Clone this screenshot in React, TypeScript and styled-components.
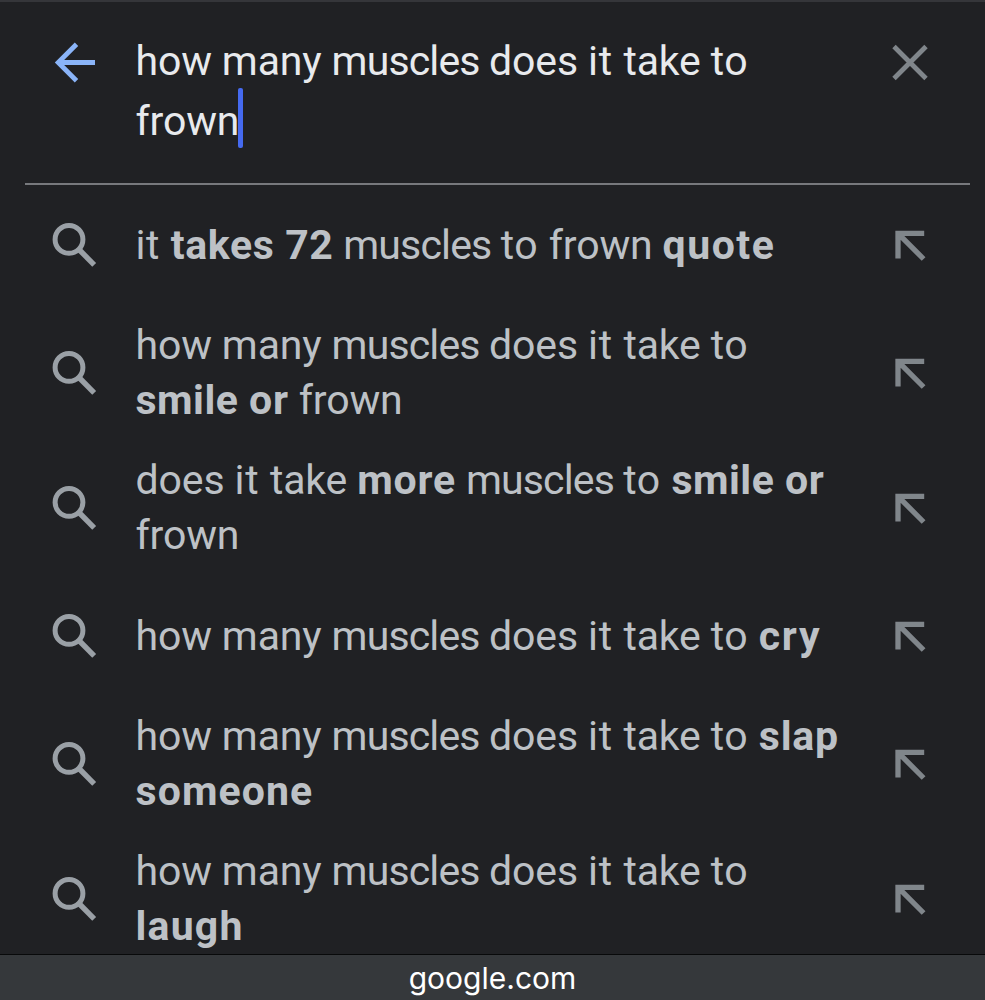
import React from "react";
import styled, { createGlobalStyle } from "styled-components";

const GlobalStyle = createGlobalStyle`
  * { box-sizing: border-box; }
  html, body { margin: 0; background: #202124; }
`;

const Screen = styled.div`
  display: flex;
  flex-direction: column;
  width: 985px;
  height: 1000px;
  overflow: hidden;
  background: #202124;
  border-top: 2px solid #35363a;
  font-family: Roboto, sans-serif;
  font-size: 41px;
`;

const SearchHeader = styled.header`
  display: flex;
  flex: none;
  height: 183px;
  margin: 0 15px 0 25px;
  padding: 29px 35px 0 25px;
  border-bottom: 2px solid #77797d;
`;

const HeaderButton = styled.button`
  display: flex;
  flex: none;
  width: 50px;
  height: 62px;
  padding: 0;
  border: 0;
  background: none;
  align-items: center;
  justify-content: center;
`;

const Query = styled.div`
  flex: 1;
  margin-left: 35.5px;
  color: #e8eaed;
  line-height: 60px;
  white-space: nowrap;
`;

const QueryLine = styled.div`
  display: flex;
  white-space: pre;
`;

const Caret = styled.span`
  width: 5px;
  height: 60px;
  margin: -3px 0 0 -1px;
  border-radius: 2px;
  background: #456af0;
`;

const Suggestions = styled.ul`
  flex: 1;
  min-height: 0;
  margin: 0;
  padding: 0;
  overflow: hidden;
  list-style: none;
`;

const Suggestion = styled.li<{ $double?: boolean }>`
  display: flex;
  align-items: center;
  height: ${(p) => (p.$double ? 135.5 : 120)}px;
  padding: 0 56px 0 50px;
`;

const SuggestionText = styled.div`
  flex: 1;
  margin-left: 35.5px;
  color: #bdc1c6;
  line-height: 55px;
  white-space: pre;
`;

const Word = styled.span<{ $bold?: boolean; $tracking: number }>`
  font-weight: ${(p) => (p.$bold ? 700 : 400)};
  letter-spacing: ${(p) => p.$tracking}px;
`;

const Icon = styled.svg`
  display: block;
  flex: none;
  fill: none;
`;

const Footer = styled.footer`
  display: flex;
  flex: none;
  height: 46px;
  align-items: center;
  justify-content: center;
  border-top: 1px solid #08090a;
  background: #35383b;
  color: #fff;
  font: 400 30px/40px Inter, sans-serif;
  letter-spacing: 0;
`;

const SearchIcon = () => (
  <Icon width="50" height="50" viewBox="0 0 50 50" stroke="#9aa0a6">
    <circle cx="19" cy="19.4" r="13.9" strokeWidth="5" />
    <path d="M29 29.5L44.2 44.9" strokeWidth="5.4" />
  </Icon>
);

const InsertIcon = () => (
  <Icon width="36" height="36" viewBox="0 0 36 36" stroke="#80868b" strokeWidth="5.3">
    <path d="M5 31.6V6.4H31.2M5.5 6.9L30.6 32" />
  </Icon>
);

const regularTracking: Record<string, number> = {
  muscles: -0.85,
  does: -0.1,
  it: 0.6,
  to: 0.5,
};

const boldTracking: Record<string, number> = {
  takes: 0.6,
  "72": 0.5,
  quote: 1.5,
  smile: 0.5,
  or: 0.7,
  cry: 1.7,
  someone: 1.1,
  laugh: 1.2,
};

/* Splits a line into tracked words; text between asterisks is bold. */
const Line = ({ text }: { text: string }) => (
  <>
    {text.split("*").map((run, i) => {
      const bold = i % 2 === 1;
      return (run.match(/\S+\s*|\s+/g) ?? []).map((word, j) => (
        <Word
          key={`${i}-${j}`}
          $bold={bold}
          $tracking={bold ? boldTracking[word.trim()] ?? 0.8 : regularTracking[word.trim()] ?? -0.15}
        >
          {word}
        </Word>
      ));
    })}
  </>
);

const suggestions: string[][] = [
  ["it *takes 72* muscles to frown *quote*"],
  ["how many muscles does it take to", "*smile or* frown"],
  ["does it take *more* muscles to *smile or*", "frown"],
  ["how many muscles does it take to *cry*"],
  ["how many muscles does it take to *slap*", "*someone*"],
  ["how many muscles does it take to", "*laugh*"],
];

export default function App() {
  return (
    <Screen>
      <GlobalStyle />
      <SearchHeader>
        <HeaderButton aria-label="Back">
          <Icon width="44" height="44" viewBox="0 0 44 44" stroke="#8ab4f8" strokeWidth="4.8">
            <path d="M42 22.5H6M23.5 4.2L5.2 22.5L23.5 40.8" />
          </Icon>
        </HeaderButton>
        <Query>
          <QueryLine><Line text="how many muscles does it take to" /></QueryLine>
          <QueryLine><Line text="frown" /><Caret /></QueryLine>
        </Query>
        <HeaderButton aria-label="Clear">
          <Icon width="40" height="40" viewBox="0 0 40 40" stroke="#80868b" strokeWidth="4.8">
            <path d="M4 4.5L36 36.5M36 4.5L4 36.5" />
          </Icon>
        </HeaderButton>
      </SearchHeader>
      <Suggestions>
        {suggestions.map((lines, i) => (
          <Suggestion key={i} $double={lines.length > 1}>
            <SearchIcon />
            <SuggestionText>
              {lines.map((line) => <div key={line}><Line text={line} /></div>)}
            </SuggestionText>
            <InsertIcon />
          </Suggestion>
        ))}
      </Suggestions>
      <Footer>google.com</Footer>
    </Screen>
  );
}
